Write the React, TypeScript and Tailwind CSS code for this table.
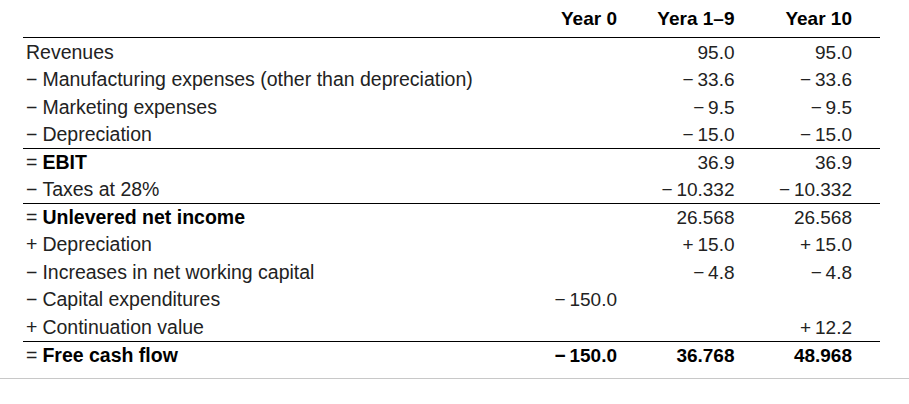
import React from 'react';

type Row = {
    label: string;
    sign: string;
    bold?: boolean;
    total?: boolean;
    y0?: string;
    y19?: string;
    y10?: string;
    lineAbove?: boolean;
};

const rows: Row[] = [
    { sign: '', label: 'Revenues', y19: '95.0', y10: '95.0' },
    { sign: '−', label: 'Manufacturing expenses (other than depreciation)', y19: '−\u200933.6', y10: '−\u200933.6' },
    { sign: '−', label: 'Marketing expenses', y19: '−\u20099.5', y10: '−\u20099.5' },
    { sign: '−', label: 'Depreciation', y19: '−\u200915.0', y10: '−\u200915.0' },
    { sign: '=', label: 'EBIT', bold: true, y19: '36.9', y10: '36.9', lineAbove: true },
    { sign: '−', label: 'Taxes at 28%', y19: '−\u200910.332', y10: '−\u200910.332' },
    { sign: '=', label: 'Unlevered net income', bold: true, y19: '26.568', y10: '26.568', lineAbove: true },
    { sign: '+', label: 'Depreciation', y19: '+\u200915.0', y10: '+\u200915.0' },
    { sign: '−', label: 'Increases in net working capital', y19: '−\u20094.8', y10: '−\u20094.8' },
    { sign: '−', label: 'Capital expenditures', y0: '−\u2009150.0' },
    { sign: '+', label: 'Continuation value', y10: '+\u200912.2' },
    { sign: '=', label: 'Free cash flow', bold: true, total: true, y0: '−\u2009150.0', y19: '36.768', y10: '48.968', lineAbove: true },
];

const Cell: React.FC<{ value?: string; bold?: boolean }> = ({ value, bold }) => (
    <div className={`w-[117.5px] pr-[28px] text-right ${bold ? 'font-bold text-black' : ''}`}>{value}</div>
);

const App: React.FC = () => {
    return (
        <div className="w-[909px] h-[404px] bg-white text-[#222] text-[19px] leading-none" style={{ fontFamily: '"Liberation Sans", Arial, sans-serif' }}>
            <div className="pl-[23px] w-[880px]">
                <div className="flex items-end h-[38px] pb-[9px] border-b border-black font-bold text-black">
                    <div className="flex-1" />
                    <Cell value="Year 0" />
                    <Cell value="Yera 1–9" />
                    <Cell value="Year 10" />
                </div>
                {rows.map((r, i) => (
                    <div key={i} className={`flex items-center h-[27.5px] pt-px ${r.lineAbove ? 'border-t border-black' : ''}`}>
                        <div className="flex-1 pl-[3px] text-[19.5px]">
                            {r.sign && <span className="mr-[5px]">{r.sign}</span>}
                            <span className={r.bold ? 'font-bold text-black' : ''}>{r.label}</span>
                        </div>
                        <Cell value={r.y0} bold={r.total} />
                        <Cell value={r.y19} bold={r.total} />
                        <Cell value={r.y10} bold={r.total} />
                    </div>
                ))}
            </div>
            <div className="mt-[10px] border-t border-[#c8c8c8]" />
        </div>
    );
};

export default App;
